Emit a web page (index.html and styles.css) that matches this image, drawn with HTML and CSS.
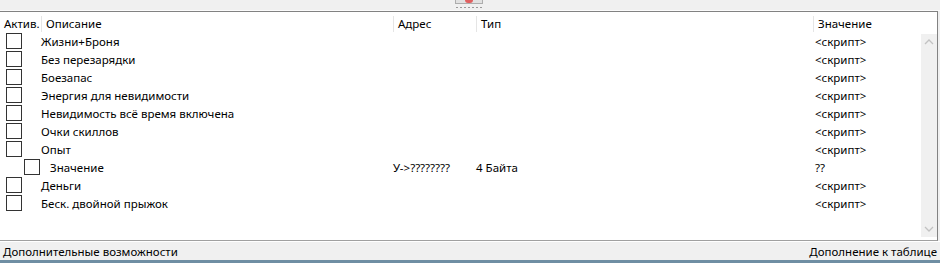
FILE: index.html
```html
<!DOCTYPE html>
<html>
<head>
<meta charset="utf-8">
<link rel="stylesheet" href="styles.css">
</head>
<body>
<div class="window">
  <div class="topbar">
    <div class="topbtn"><span class="red"></span></div>
    <div class="grip"></div>
  </div>
  <div class="list">
    <div class="main">
      <div class="header">
        <div class="hcell c1">Актив.</div>
        <div class="hcell c2">Описание</div>
        <div class="hcell c3">Адрес</div>
        <div class="hcell c4">Тип</div>
        <div class="hcell c5">Значение</div>
      </div>
      <div class="body">
        <div class="rows">
          <div class="row"><div class="cb"></div><div class="desc">Жизни+Броня</div><div class="addr"></div><div class="type"></div><div class="val">&lt;скрипт&gt;</div></div>
          <div class="row"><div class="cb"></div><div class="desc">Без перезарядки</div><div class="addr"></div><div class="type"></div><div class="val">&lt;скрипт&gt;</div></div>
          <div class="row"><div class="cb"></div><div class="desc">Боезапас</div><div class="addr"></div><div class="type"></div><div class="val">&lt;скрипт&gt;</div></div>
          <div class="row"><div class="cb"></div><div class="desc">Энергия для невидимости</div><div class="addr"></div><div class="type"></div><div class="val">&lt;скрипт&gt;</div></div>
          <div class="row"><div class="cb"></div><div class="desc">Невидимость всё время включена</div><div class="addr"></div><div class="type"></div><div class="val">&lt;скрипт&gt;</div></div>
          <div class="row"><div class="cb"></div><div class="desc">Очки скиллов</div><div class="addr"></div><div class="type"></div><div class="val">&lt;скрипт&gt;</div></div>
          <div class="row"><div class="cb"></div><div class="desc">Опыт</div><div class="addr"></div><div class="type"></div><div class="val">&lt;скрипт&gt;</div></div>
          <div class="row sub"><div class="cb"></div><div class="desc">Значение</div><div class="addr">У-&gt;????????</div><div class="type">4 Байта</div><div class="val">??</div></div>
          <div class="row"><div class="cb"></div><div class="desc">Деньги</div><div class="addr"></div><div class="type"></div><div class="val">&lt;скрипт&gt;</div></div>
          <div class="row"><div class="cb"></div><div class="desc">Беск. двойной прыжок</div><div class="addr"></div><div class="type"></div><div class="val">&lt;скрипт&gt;</div></div>
        </div>
        <div class="scroll">
          <svg class="arrow" width="16" height="16" viewBox="0 0 16 16"><path d="M4 10 L8 6 L12 10" fill="none" stroke="#c2c2c2" stroke-width="1.3"/></svg>
          <svg class="arrow" width="16" height="16" viewBox="0 0 16 16"><path d="M4 6 L8 10 L12 6" fill="none" stroke="#c2c2c2" stroke-width="1.3"/></svg>
        </div>
      </div>
    </div>
  </div>
  <div class="status">
    <div class="st-left">Дополнительные возможности</div>
    <div class="st-right">Дополнение к таблице</div>
  </div>
  <div class="bottomline"></div>
</div>
</body>
</html>
```
FILE: styles.css
```css
html, body {
  margin: 0;
  padding: 0;
  background: #f0f0f0;
}
body {
  font-family: "Noto Sans", "Open Sans", sans-serif;
  font-size: 11.5px;
  color: #000;
  width: 940px;
  height: 263px;
  overflow: hidden;
}
.window {
  display: flex;
  flex-direction: column;
  height: 263px;
}
.topbar {
  height: 10px;
  background: #f0f0f0;
  border-bottom: 1px solid #fbfbfb;
  display: flex;
  flex-direction: column;
  align-items: center;
}
.topbtn {
  width: 26px;
  height: 3px;
  margin-left: -2px;
  border: 1px solid #adadad;
  border-top: none;
  background: #e1e1e1;
  display: flex;
  justify-content: center;
}
.red {
  width: 8px;
  height: 3px;
  background: #e06060;
  border-radius: 0 0 3px 3px;
}
.grip {
  margin-top: 3px;
  width: 28px;
  height: 1px;
  background: repeating-linear-gradient(90deg, #9a9a9a 0 2px, transparent 2px 4px);
}
.list {
  height: 228px;
  border-top: 1px solid #828282;
  border-right: 1px solid #828282;
  border-bottom: 1px solid #a0a0a0;
  margin-right: 2px;
  background: #fff;
  display: flex;
}
.main {
  flex: 1;
  display: flex;
  flex-direction: column;
}
.header {
  height: 20px;
  display: grid;
  grid-template-columns: 41px 352px 83px 337px 1fr;
  align-items: end;
}
.hcell {
  height: 16px;
  line-height: 15px;
  padding-left: 4px;
  border-left: 1px solid #e5e5e5;
  white-space: nowrap;
}
.hcell.c1 {
  border-left: none;
  padding-left: 4px;
}
.body {
  flex: 1;
  display: flex;
}
.rows {
  flex: 1;
}
.row {
  height: 18px;
  display: grid;
  grid-template-columns: 41px 352px 83px 337px 1fr;
  align-items: center;
  white-space: nowrap;
}
.cb {
  width: 14px;
  height: 14px;
  border: 1px solid #333;
  margin-left: 6px;
  background: #fff;
}
.val {
  padding-left: 2px;
}
.row.sub {
  grid-template-columns: 50px 343px 83px 337px 1fr;
}
.row.sub .cb {
  margin-left: 24px;
}
.scroll {
  width: 16px;
  margin-top: 2px;
  margin-bottom: 3px;
  background: #f0f0f0;
  display: flex;
  flex-direction: column;
  justify-content: space-between;
}
.arrow {
  display: block;
}
.status {
  height: 18px;
  display: flex;
  justify-content: space-between;
  align-items: center;
  background: #f0f0f0;
  border-top: 1px solid #fff;
  padding: 0 3px 0 3px;
  white-space: nowrap;
}
.bottomline {
  flex: 1;
  background: #6f8ea3;
}
```
